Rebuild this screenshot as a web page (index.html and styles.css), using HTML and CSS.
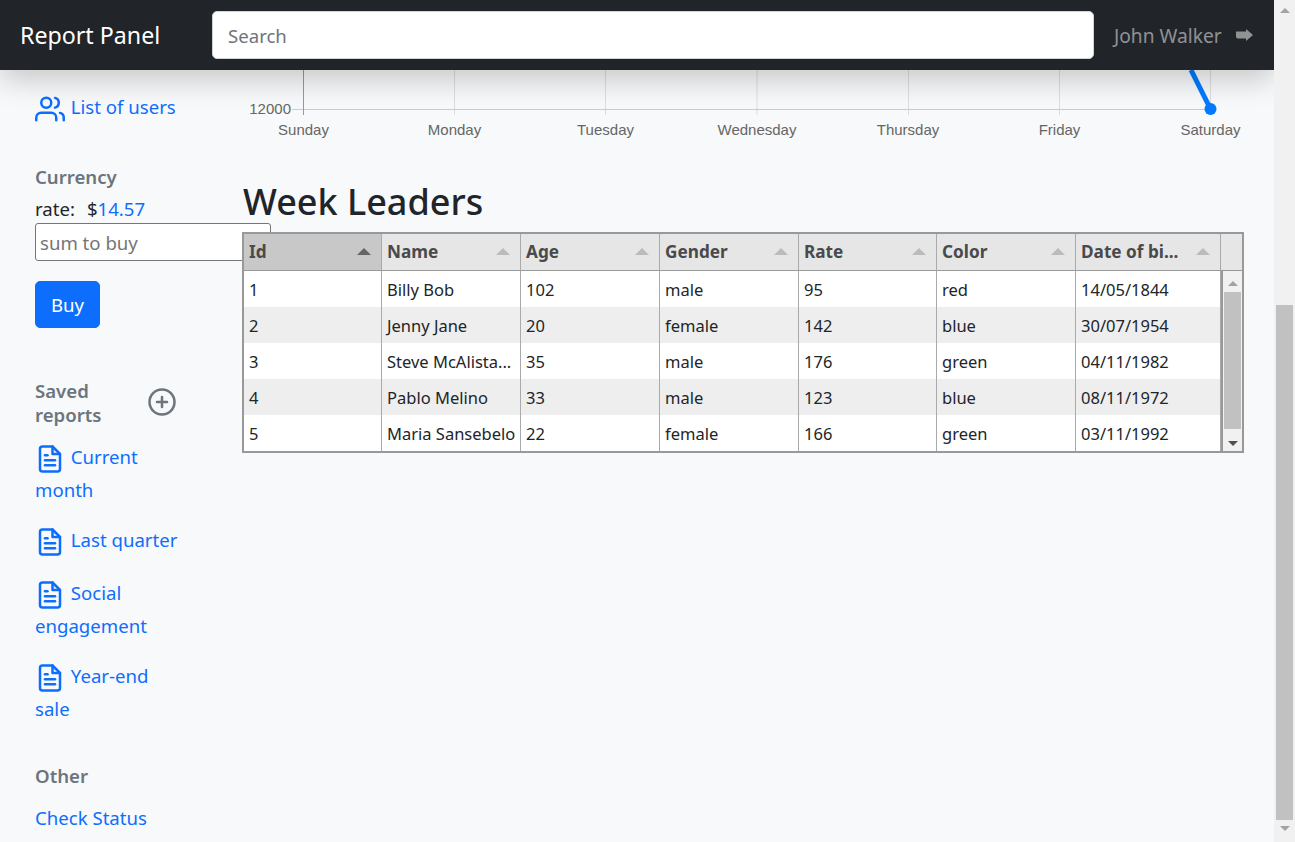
FILE: index.html
```html
<!DOCTYPE html>
<html lang="en">
<head>
  <meta charset="UTF-8" />
  <meta name="viewport" content="width=device-width, initial-scale=1.0"/>
  <title>Report Panel</title>
  <link rel="stylesheet" href="styles.css">
</head>
<body>
  <div class="page">
    <header class="navbar">
      <a href="#" class="brand">Report Panel</a>
      <input class="search" type="text" placeholder="Search">
      <a href="#" class="user">John Walker
        <svg class="signout" viewBox="0 0 17 12"><path d="M0 2.500h10V0l7 6-7 6V9.500H2Q0 9.500 0 7.500z"/></svg>
      </a>
    </header>

    <div class="content">
      <nav class="sidebar">
        <a href="#" class="users-link">
          <svg class="icon" viewBox="0 0 24 24"><path d="M17 21v-2a4 4 0 0 0-4-4H5a4 4 0 0 0-4 4v2"/><circle cx="9" cy="7" r="4"/><path d="M23 21v-2a4 4 0 0 0-3-3.870"/><path d="M16 3.130a4 4 0 0 1 0 7.750"/></svg>
          List of users
        </a>

        <h6 class="side-title currency-title">Currency</h6>
        <div class="rate">rate:<span class="rate-value">$<a href="#">14.57</a></span></div>
        <input class="sum" type="text" placeholder="sum to buy">
        <button class="buy">Buy</button>

        <div class="saved-head">
          <h6 class="side-title">Saved<br>reports</h6>
          <svg class="icon plus" viewBox="0 0 24 24"><circle cx="12" cy="12" r="10"/><line x1="12" y1="8" x2="12" y2="16"/><line x1="8" y1="12" x2="16" y2="12"/></svg>
        </div>
        <ul class="reports">
          <li><a href="#"><svg class="icon doc" viewBox="0 0 24 24"><use href="#file-text"/></svg> Current month</a></li>
          <li class="single"><a href="#"><svg class="icon doc" viewBox="0 0 24 24"><use href="#file-text"/></svg> Last quarter</a></li>
          <li><a href="#"><svg class="icon doc" viewBox="0 0 24 24"><use href="#file-text"/></svg> Social engagement</a></li>
          <li><a href="#"><svg class="icon doc" viewBox="0 0 24 24"><use href="#file-text"/></svg> Year-end sale</a></li>
        </ul>

        <h6 class="side-title other-title">Other</h6>
        <a href="#" class="status">Check Status</a>
      </nav>

      <main class="main">
        <svg class="chart" viewBox="0 0 1031 70" width="1031" height="70">
          <g class="grid">
            <line x1="211.500" y1="0" x2="211.500" y2="45"/>
            <line x1="362.500" y1="0" x2="362.500" y2="45"/>
            <line x1="514" y1="0" x2="514" y2="45"/>
            <line x1="665.500" y1="0" x2="665.500" y2="45"/>
            <line x1="816.500" y1="0" x2="816.500" y2="45"/>
            <line x1="967.500" y1="0" x2="967.500" y2="45"/>
            <line x1="49" y1="39.500" x2="968" y2="39.500"/>
          </g>
          <line class="axis" x1="60.500" y1="0" x2="60.500" y2="45"/>
          <g class="labels">
            <text x="60.500" y="65">Sunday</text>
            <text x="211.500" y="65">Monday</text>
            <text x="362.500" y="65">Tuesday</text>
            <text x="514" y="65">Wednesday</text>
            <text x="665" y="65">Thursday</text>
            <text x="816.500" y="65">Friday</text>
            <text x="967.500" y="65">Saturday</text>
            <text class="tick" x="48" y="44">12000</text>
          </g>
          <line class="series" x1="948" y1="0" x2="967.500" y2="39"/>
          <circle class="point" cx="967.500" cy="39" r="6"/>
        </svg>

        <h2 class="leaders">Week Leaders</h2>

        <table class="grid-table">
          <colgroup>
            <col class="col-narrow"><col class="col-data"><col class="col-data"><col class="col-data">
            <col class="col-narrow"><col class="col-data"><col class="col-date"><col class="col-bar">
          </colgroup>
          <thead>
            <tr>
              <th class="sorted"><span>Id</span><i></i></th>
              <th><span>Name</span><i></i></th>
              <th><span>Age</span><i></i></th>
              <th><span>Gender</span><i></i></th>
              <th><span>Rate</span><i></i></th>
              <th><span>Color</span><i></i></th>
              <th><span>Date of bi...</span><i></i></th>
              <th class="corner"></th>
            </tr>
          </thead>
          <tbody>
            <tr>
              <td>1</td><td>Billy Bob</td><td>102</td><td>male</td><td>95</td><td>red</td><td>14/05/1844</td>
              <td class="bar-cell" rowspan="5">
                <div class="table-scroll">
                  <b class="up"></b>
                  <div class="table-thumb"></div>
                  <b class="down"></b>
                </div>
              </td>
            </tr>
            <tr class="odd"><td>2</td><td>Jenny Jane</td><td>20</td><td>female</td><td>142</td><td>blue</td><td>30/07/1954</td></tr>
            <tr><td>3</td><td>Steve McAlista...</td><td>35</td><td>male</td><td>176</td><td>green</td><td>04/11/1982</td></tr>
            <tr class="odd"><td>4</td><td>Pablo Melino</td><td>33</td><td>male</td><td>123</td><td>blue</td><td>08/11/1972</td></tr>
            <tr><td>5</td><td>Maria Sansebelo</td><td>22</td><td>female</td><td>166</td><td>green</td><td>03/11/1992</td></tr>
          </tbody>
        </table>
      </main>
    </div>
  </div>

  <div class="page-scroll">
    <b class="up"></b>
    <div class="page-thumb"></div>
    <b class="down"></b>
  </div>

  <svg class="defs" width="0" height="0">
    <symbol id="file-text" viewBox="0 0 24 24">
      <path d="M14 2H6a2 2 0 0 0-2 2v16a2 2 0 0 0 2 2h12a2 2 0 0 0 2-2V8z"/>
      <polyline points="14 2 14 8 20 8"/>
      <line x1="16" y1="13" x2="8" y2="13"/>
      <line x1="16" y1="17" x2="8" y2="17"/>
      <polyline points="10 9 9 9 8 9"/>
    </symbol>
  </svg>
</body>
</html>
```

FILE: styles.css
```css
* {
  box-sizing: border-box;
}
html, body {
  height: 100%;
}
body {
  margin: 0;
  display: flex;
  overflow: hidden;
  font-family: "Noto Sans", sans-serif;
  font-size: 18.6px;
  line-height: 24px;
  color: #212529;
  background-color: #f8f9fa;
}
a {
  color: #0d6efd;
  text-decoration: none;
}
.defs {
  position: absolute;
}
.page {
  flex: 1;
  min-width: 0;
  display: flex;
  flex-direction: column;
  height: 842px;
  overflow: hidden;
}

/* top bar */
.navbar {
  position: relative;
  z-index: 2;
  flex: none;
  height: 70px;
  display: flex;
  align-items: center;
  background-color: #212529;
  box-shadow: 0 10px 30px rgba(0, 0, 0, .2);
}
.brand {
  width: 212px;
  padding-left: 20px;
  color: #fff;
  font-size: 23.200px;
}
.search {
  width: 882px;
  height: 48px;
  padding: 0 15px;
  border: 1px solid #ced4da;
  border-radius: 5px;
  font: inherit;
}
.search::placeholder {
  color: #6c757d;
}
.user {
  flex: 1;
  display: flex;
  align-items: center;
  padding: 2px 0 0 20px;
  font-size: 19.200px;
  color: rgba(255, 255, 255, .5);
}
.signout {
  width: 17px;
  height: 12px;
  margin: 0 0 2px 14px;
  fill: rgba(255, 255, 255, .5);
}

/* left column */
.content {
  flex: 1;
  display: flex;
  min-height: 0;
}
.sidebar {
  flex: none;
  width: 243px;
  padding: 24px 0 0 35px;
}
.icon {
  width: 30px;
  height: 30px;
  margin-right: 1px;
  fill: none;
  stroke: #0d6efd;
  stroke-width: 2;
  stroke-linecap: round;
  stroke-linejoin: round;
  vertical-align: middle;
}
.users-link {
  display: block;
  height: 30px;
}
.side-title {
  margin: 0;
  font-size: 18.6px;
  line-height: 24px;
  font-weight: 600;
  color: #6c757d;
}
.currency-title {
  margin-top: 41px;
}
.rate {
  margin-top: 8px;
  height: 24px;
}
.rate-value {
  margin-left: 12px;
}
.sum {
  display: block;
  width: 236px;
  height: 38px;
  margin-top: 2px;
  padding: 0 4px;
  border: 1px solid #767676;
  border-radius: 3px;
  font: inherit;
  background-color: #fff;
}
.sum::placeholder {
  color: #757575;
}
.buy {
  display: block;
  width: 65px;
  height: 47px;
  margin-top: 20px;
  border: 1px solid #0d6efd;
  border-radius: 5px;
  background-color: #0d6efd;
  color: #fff;
  font: inherit;
}
.saved-head {
  display: flex;
  align-items: center;
  justify-content: space-between;
  width: 142px;
  margin-top: 51px;
}
.plus {
  margin: 0 0 2px;
  stroke: #6c757d;
}
.reports {
  list-style: none;
  margin: 14px 0 0;
  padding: 0;
  width: 150px;
}
.reports li {
  margin-bottom: 18px;
  line-height: 32px;
}
.reports li.single {
  margin-bottom: 20px;
}
.other-title {
  margin-top: 39px;
}
.status {
  display: block;
  margin-top: 18px;
}

/* chart and table */
.main {
  position: relative;
  flex: 1;
  min-width: 0;
}
.chart {
  display: block;
}
.grid line {
  stroke: #ddd;
  stroke-width: 1;
}
.grid line:last-child {
  stroke: #ccc;
}
.axis {
  stroke: #999;
  stroke-width: 1;
}
.labels text {
  font-family: "Liberation Sans", sans-serif;
  font-size: 15px;
  fill: #666;
  text-anchor: middle;
}
.labels .tick {
  text-anchor: end;
}
.series {
  stroke: #007bff;
  stroke-width: 5;
}
.point {
  fill: #007bff;
}
.leaders {
  margin: 40px 0 0;
  font-size: 36px;
  line-height: 44px;
  font-weight: 500;
}
.grid-table {
  width: 1002px;
  margin: 8px 0 0 -1px;
  table-layout: fixed;
  border-collapse: separate;
  border-spacing: 0;
  border: 2px solid #999;
  background-color: #fff;
}
.col-data {
  width: 139px;
}
.col-narrow {
  width: 138px;
}
.col-date {
  width: 145px;
}
.col-bar {
  width: 21px;
}
.grid-table th {
  position: relative;
  height: 37px;
  padding: 0 0 0 5px;
  text-align: left;
  font-size: 17.200px;
  font-weight: 700;
  color: #4a4a4a;
  background-color: #e6e6e6;
  border-right: 1px solid #aaa;
  border-bottom: 1px solid #999;
}
.grid-table th i {
  position: absolute;
  right: 10px;
  top: 14px;
  border-left: 7.500px solid transparent;
  border-right: 7.500px solid transparent;
  border-bottom: 7px solid #bbb;
}
.grid-table th.sorted {
  background-color: #c8c8c8;
}
.grid-table th.sorted i {
  border-bottom-color: #666;
}
.grid-table th.corner {
  border-right: 0;
}
.grid-table td {
  height: 36px;
  padding: 1px 0 0 5px;
  font-size: 16.500px;
  white-space: nowrap;
  overflow: hidden;
  border-right: 1px solid #aaa;
}
.grid-table .odd td {
  background-color: #eee;
}
.grid-table td.bar-cell {
  padding: 0;
  border-right: 0;
  border-left: 2px solid #999;
  background-color: #f1f1f1;
}
.table-scroll {
  display: flex;
  flex-direction: column;
  align-items: center;
  height: 180px;
  padding-top: 10px;
}
.table-thumb {
  width: 17px;
  height: 137px;
  margin: 6px 0;
  background-color: #c1c1c1;
}
.up, .down {
  flex: none;
  width: 0;
  height: 0;
  border-left: 5px solid transparent;
  border-right: 5px solid transparent;
}
.up {
  border-bottom: 5px solid #a3a3a3;
}
.down {
  border-top: 5px solid #505050;
  margin-top: 6px;
}
.page-scroll {
  flex: none;
  width: 21px;
  height: 842px;
  display: flex;
  flex-direction: column;
  align-items: center;
  padding-top: 8px;
  background-color: #f1f1f1;
}
.page-thumb {
  flex: none;
  width: 17px;
  height: 515px;
  margin-top: 292px;
  background-color: #c1c1c1;
}
.page-scroll .down {
  margin-top: 6px;
  border-top-color: #a3a3a3;
}
```
